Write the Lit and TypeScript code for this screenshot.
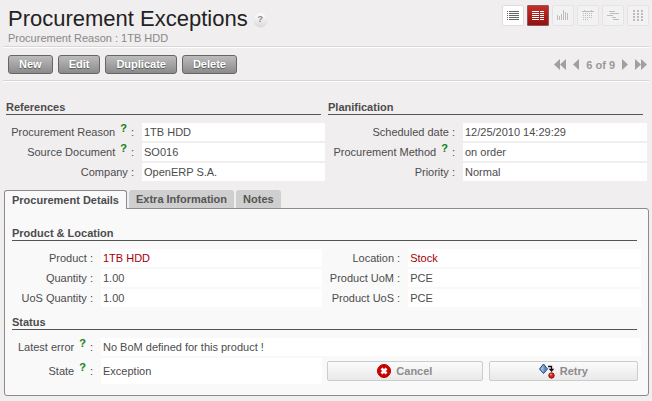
import { LitElement, html, css, svg, nothing } from "lit";
import { customElement, state } from "lit/decorators.js";
import { classMap } from "lit/directives/class-map.js";

type Field = { id: string; label: string; value: string; help?: boolean; link?: boolean; wide?: boolean };
type Box = [number, number, number, number];

const REFERENCES: Field[] = [
  { id: "reason", label: "Procurement Reason", value: "1TB HDD", help: true },
  { id: "source", label: "Source Document", value: "SO016", help: true },
  { id: "company", label: "Company", value: "OpenERP S.A." },
];

const PLANIFICATION: Field[] = [
  { id: "date", label: "Scheduled date", value: "12/25/2010 14:29:29" },
  { id: "method", label: "Procurement Method", value: "on order", help: true },
  { id: "priority", label: "Priority", value: "Normal" },
];

const PRODUCT: Field[] = [
  { id: "product", label: "Product", value: "1TB HDD", link: true },
  { id: "location", label: "Location", value: "Stock", link: true },
  { id: "quantity", label: "Quantity", value: "1.00" },
  { id: "uom", label: "Product UoM", value: "PCE" },
  { id: "uos-quantity", label: "UoS Quantity", value: "1.00" },
  { id: "uos", label: "Product UoS", value: "PCE" },
];

const STATUS: Field[] = [
  { id: "error", label: "Latest error", value: "No BoM defined for this product !", help: true, wide: true },
  { id: "state", label: "State", value: "Exception", help: true },
];

const LINES = [6, 8, 10, 12, 14];

const VIEWS: { name: string; kind: string; boxes: Box[] }[] = [
  { name: "List", kind: "ready", boxes: LINES.flatMap((y): Box[] => [[5, y, 1, 1], [7, y, 10, 1]]) },
  { name: "Form", kind: "current", boxes: LINES.flatMap((y): Box[] => [[5, y, 7, 1], [13, y, 4, 1]]) },
  {
    name: "Graph",
    kind: "off",
    boxes: [[5, 10, 1, 5], [7, 11, 1, 4], [9, 9, 1, 6], [11, 5, 1, 10], [13, 7, 1, 8], [15, 8, 1, 7]],
  },
  {
    name: "Calendar",
    kind: "off",
    boxes: [
      [5, 6, 12, 1], [7, 5, 1, 1], [14, 5, 1, 1],
      ...[8, 10, 12].flatMap((y) => [6, 8, 10, 12, 14].map((x): Box => [x, y, 1, 1])),
      ...[6, 8, 10].map((x): Box => [x, 14, 1, 1]),
    ],
  },
  { name: "Gantt", kind: "off", boxes: [[7, 6, 6, 1], [8, 8, 9, 1], [5, 10, 6, 1], [10, 12, 4, 1], [11, 14, 6, 1]] },
  {
    name: "Kanban",
    kind: "off",
    boxes: [5, 8, 11, 14].flatMap((y) => [6, 10, 14].map((x): Box => [x, y, 2, 2])),
  },
];

@customElement("app-root")
export class AppRoot extends LitElement {
  @state() private tab = 0;

  static styles = css`
    :host {
      display: block;
      box-sizing: border-box;
      min-height: 100vh;
      padding: 5px 3px;
      background: #f0eeef;
      color: #4c4c4c;
      font: 11px/18px "Liberation Sans", Arial, sans-serif;
    }
    *, *::before { box-sizing: border-box; }
    button { font: inherit; margin: 0; padding: 0; cursor: pointer; }
    svg { display: block; }
    h1, h2 { margin: 0; }

    .header {
      display: flex;
      justify-content: space-between;
      align-items: flex-start;
      padding: 0 0 0 5px;
    }
    .title-row { display: flex; align-items: center; gap: 6px; }
    .title { font-size: 22px; line-height: 28px; font-weight: 400; color: #222; }
    .about {
      width: 13px;
      height: 13px;
      border-radius: 7px;
      background: linear-gradient(#fdfdfd, #dedede);
      box-shadow: 0 1px 1px #ccc;
      color: #888;
      font-size: 9px;
      font-weight: 700;
      line-height: 13px;
      text-align: center;
      text-decoration: none;
    }
    .subtitle { line-height: 11px; color: #888; padding-bottom: 2px; }

    .views { display: flex; gap: 3px; }
    .view {
      width: 22px;
      height: 21px;
      border: 0;
      border-radius: 2px;
      box-shadow: inset 0 0 0 1px #e4e4e4;
      background: #f3f2f2;
      color: #bcbcbc;
    }
    .view.ready { background: #fff; color: #666; box-shadow: inset 0 0 0 1px #ddd; }
    .view.current {
      background: linear-gradient(#c8302a, #8e1010);
      color: #fff;
      box-shadow: inset 0 0 0 1px #8a5a58;
    }

    .toolbar {
      display: flex;
      justify-content: space-between;
      align-items: center;
      height: 35px;
      padding: 2px 2px 0 5px;
      border-top: 1px solid #d6d6d6;
      border-bottom: 1px solid #d6d6d6;
      box-shadow: inset 0 1px #fff, 0 1px #fff;
    }
    .actions { display: flex; gap: 5px; }
    .action {
      height: 19px;
      padding: 0 10px;
      border: 1px solid #666;
      border-radius: 3px;
      background: linear-gradient(#bcbcbc, #8b8b8b);
      color: #fff;
      font-weight: 700;
      line-height: 17px;
      text-shadow: 0 1px 1px #555;
    }
    .pager { display: flex; align-items: center; gap: 7px; color: #999; font-weight: 700; }
    .page { border: 0; background: none; color: #a0a0a0; }

    .summary {
      display: grid;
      grid-template-columns: 1fr 1fr;
      gap: 3px;
      padding: 18px 2px 9px 3px;
    }
    .heading {
      margin-right: 4px;
      padding-top: 2px;
      border-bottom: 1px solid #555;
      font-size: 11px;
      line-height: 13px;
      font-weight: 700;
    }
    .fields { display: grid; row-gap: 2px; padding-top: 8px; }
    .fields.left { grid-template-columns: 136px 1fr; }
    .fields.right { grid-template-columns: 135px 1fr; }
    .fields.double { grid-template-columns: 89px 19fr 86px 20fr; }
    .label {
      display: flex;
      justify-content: flex-end;
      align-items: center;
      padding-right: 8px;
      white-space: pre;
    }
    .help {
      margin: 0 4px 0 5px;
      padding-bottom: 8px;
      color: #118011;
      font-weight: 700;
      line-height: 10px;
    }
    .value { display: flex; align-items: center; min-height: 18px; padding: 0 2px; background: #fff; }
    .value.wide { grid-column: span 3; }
    .link { color: #a30008; text-decoration: none; }

    .tabs { display: flex; gap: 2px; padding-left: 1px; }
    .tab {
      height: 18px;
      padding: 1px 7px 0;
      border: 0;
      border-radius: 3px 3px 0 0;
      background: #cfcfcf;
      color: #555;
      font-weight: 700;
      line-height: 17px;
    }
    .tab.selected {
      position: relative;
      height: 19px;
      margin-bottom: -1px;
      border: 1px solid #8c8c8c;
      border-bottom: 0;
      background: #f9f9f9;
      color: #4c4c4c;
    }
    .panel {
      min-height: 188px;
      margin: 0 0 0 1px;
      padding: 16px 7px 10px;
      border: 1px solid #8c8c8c;
      border-radius: 0 3px 3px 3px;
      background: #f9f9f9;
    }
    .status { padding-top: 7px; }
    .choices {
      grid-column: span 2;
      display: flex;
      align-items: center;
      gap: 6px;
      height: 26px;
      padding: 0 3px 0 5px;
    }
    .choice {
      flex: 1 1 auto;
      display: flex;
      justify-content: center;
      align-items: center;
      gap: 5px;
      height: 20px;
      border: 1px solid #ccc;
      border-radius: 2px;
      background: linear-gradient(#fbfbfb, #e9e9e9);
      color: #8c8c8c;
      font-weight: 700;
    }
  `;

  private renderField = (f: Field) => html`
    <label class="label" for=${f.id}
      >${f.label}${f.help ? html`<span class="help">?</span>:` : " :"}</label
    >
    <output class=${classMap({ value: true, wide: !!f.wide })} id=${f.id}
      >${f.link ? html`<a class="link" href="#${f.id}">${f.value}</a>` : f.value}</output
    >
  `;

  private renderArrow(label: string, path: string, width: number) {
    return html`<button class="page" aria-label=${label}>
      <svg width=${width} height="11" fill="currentColor"><path d=${path} /></svg>
    </button>`;
  }

  private renderDetails() {
    return html`
      <h2 class="heading">Product &amp; Location</h2>
      <div class="fields double">${PRODUCT.map(this.renderField)}</div>
      <div class="status">
        <h2 class="heading">Status</h2>
        <div class="fields double">
          ${STATUS.map(this.renderField)}
          <div class="choices">
            <button class="choice">
              <svg width="14" height="14">
                <circle cx="7" cy="7" r="6.5" fill="#d40000" stroke="#a40000" />
                <path d="M4.5 4.5l5 5M9.5 4.5l-5 5" stroke="#fff" stroke-width="2.6" />
              </svg>
              Cancel
            </button>
            <button class="choice">
              <svg width="16" height="16">
                <path d="M4.5 1L8.5 6L4.5 10.5L.5 6Z" fill="#5f8cc4" stroke="#27497a" />
                <path d="M4.5 2V9.5L1.5 6Z" fill="#9dbde2" />
                <path d="M9 3.5h3.5V7" fill="none" stroke="#111" stroke-width="1.3" />
                <path d="M9.7 5.8h5.6L12.5 9Z" fill="#111" />
                <circle cx="12.5" cy="12.5" r="2.7" fill="#e02020" stroke="#8e0c0c" />
                <circle cx="11.8" cy="11.6" r="1" fill="#ff8a8a" />
              </svg>
              Retry
            </button>
          </div>
        </div>
      </div>
    `;
  }

  render() {
    return html`
      <header class="header">
        <div>
          <div class="title-row">
            <h1 class="title">Procurement Exceptions</h1>
            <a class="about" href="#help" aria-label="Help">?</a>
          </div>
          <div class="subtitle">Procurement Reason : 1TB HDD</div>
        </div>
        <nav class="views">
          ${VIEWS.map(
            (v) => html`<button class="view ${v.kind}" aria-label=${v.name}>
              <svg width="22" height="21" fill="currentColor" shape-rendering="crispEdges">
                ${v.boxes.map(([x, y, w, h]) => svg`<rect x=${x} y=${y} width=${w} height=${h} />`)}
              </svg>
            </button>`
          )}
        </nav>
      </header>
      <div class="toolbar">
        <div class="actions">
          ${["New", "Edit", "Duplicate", "Delete"].map((a) => html`<button class="action">${a}</button>`)}
        </div>
        <nav class="pager">
          ${this.renderArrow("First", "M6 0V11L0 5.5ZM12 0V11L6 5.5Z", 12)}
          ${this.renderArrow("Previous", "M6 0V11L0 5.5Z", 6)}
          <span>6 of 9</span>
          ${this.renderArrow("Next", "M0 0L6 5.5L0 11Z", 6)}
          ${this.renderArrow("Last", "M0 0L6 5.5L0 11ZM6 0L12 5.5L6 11Z", 12)}
        </nav>
      </div>
      <div class="summary">
        <section>
          <h2 class="heading">References</h2>
          <div class="fields left">${REFERENCES.map(this.renderField)}</div>
        </section>
        <section>
          <h2 class="heading">Planification</h2>
          <div class="fields right">${PLANIFICATION.map(this.renderField)}</div>
        </section>
      </div>
      <div class="tabs" role="tablist">
        ${["Procurement Details", "Extra Information", "Notes"].map(
          (t, i) => html`<button
            role="tab"
            aria-selected=${this.tab === i}
            class=${classMap({ tab: true, selected: this.tab === i })}
            @click=${() => (this.tab = i)}
          >${t}</button>`
        )}
      </div>
      <section class="panel" role="tabpanel">${this.tab === 0 ? this.renderDetails() : nothing}</section>
    `;
  }
}
